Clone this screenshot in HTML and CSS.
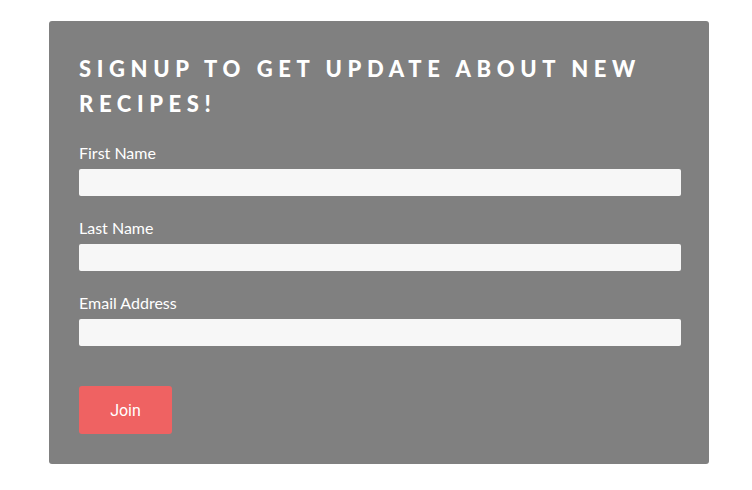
FILE: index.html
```html
<!DOCTYPE html>
<html>
<head>
<meta charset="utf-8">
<link rel="stylesheet" href="styles.css">
</head>
<body>
<div class="card">
  <h2 class="title">Signup to get update about new recipes!</h2>
  <form class="form">
    <div class="field">
      <label class="label">First Name</label>
      <input class="input" type="text">
    </div>
    <div class="field">
      <label class="label">Last Name</label>
      <input class="input" type="text">
    </div>
    <div class="field">
      <label class="label">Email Address</label>
      <input class="input" type="email">
    </div>
    <button class="btn" type="button">Join</button>
  </form>
</div>
</body>
</html>
```
FILE: styles.css
```css
html, body {
  margin: 0;
  padding: 0;
  background: #ffffff;
}
body {
  padding: 21px 43px 0 49px;
}
.card {
  width: 660px;
  box-sizing: border-box;
  background: #808080;
  border-radius: 3px;
  padding: 30px 28px 30px 30px;
}
.title {
  margin: 0 0 20px 0;
  font-family: Lato, "Open Sans", sans-serif;
  font-weight: 900;
  font-size: 22px;
  line-height: 35px;
  letter-spacing: 5.6px;
  text-transform: uppercase;
  color: #ffffff;
}
.form {
  display: flex;
  flex-direction: column;
  align-items: flex-start;
}
.field {
  display: flex;
  flex-direction: column;
  width: 100%;
  margin-bottom: 20px;
}
.label {
  font-family: Lato, "Open Sans", sans-serif;
  font-size: 16px;
  line-height: 24px;
  color: #ffffff;
  margin-bottom: 4px;
}
.input {
  height: 27px;
  box-sizing: border-box;
  border: none;
  border-radius: 2px;
  background: #f7f7f7;
  width: 602px;
  margin: 0;
  padding: 0 8px;
}
.btn {
  margin-top: 20px;
  width: 93px;
  height: 48px;
  border: none;
  border-radius: 3px;
  background: #ef6262;
  color: #ffffff;
  font-family: Roboto, "Liberation Sans", sans-serif;
  font-size: 16px;
  padding: 0;
}
```
